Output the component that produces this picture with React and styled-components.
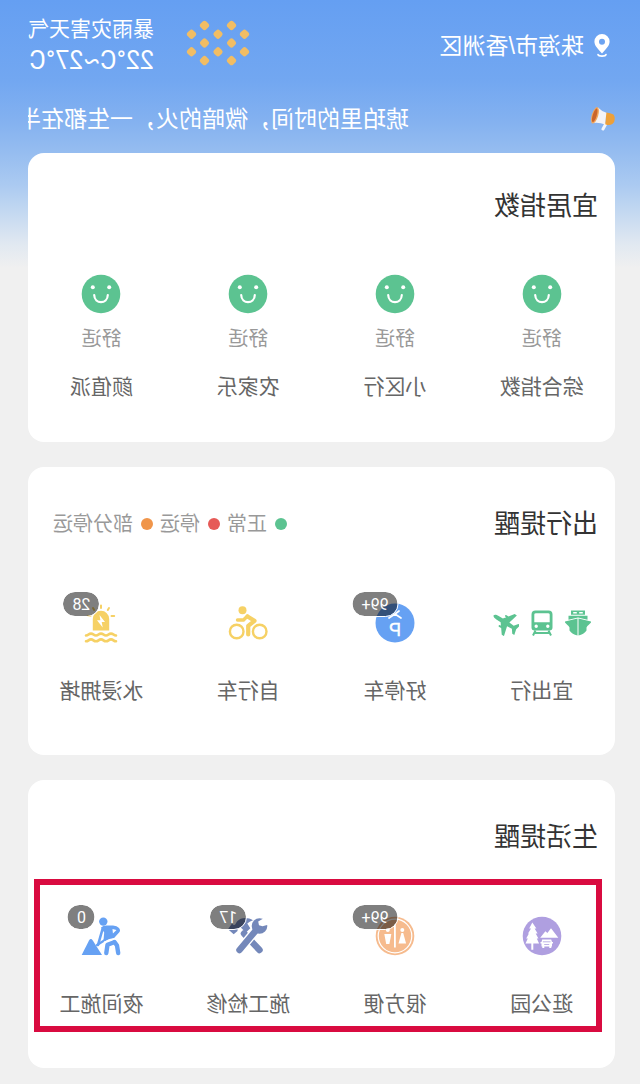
import styled, { createGlobalStyle, css } from "styled-components";

const GREEN = "#5cc391";
const BLUE = "#66a1f3";
const YELLOW = "#f6d165";

export default function App() {
  return (
    <>
      <GlobalStyle />
      <Page>
        <Header>
          <Location href="#location">
            <PinIcon />
            珠海市/香洲区
          </Location>
          <Weather>
            <WeatherIcon />
            <WeatherText>
              <p>暴雨灾害天气</p>
              <Temperature>22°C~27°C</Temperature>
            </WeatherText>
          </Weather>
        </Header>

        <News>
          <MegaphoneIcon />
          <NewsText>琥珀里的时间，微暗的火，一生都在半</NewsText>
        </News>

        <Cards>
          <Card $rated>
            <CardHead>
              <h2>宜居指数</h2>
            </CardHead>
            <Tiles>
              {["综合指数", "小区行", "农家乐", "颜值派"].map((name) => (
                <Tile key={name} type="button">
                  <SmileIcon />
                  <Rating>舒适</Rating>
                  <TileLabel $rated>{name}</TileLabel>
                </Tile>
              ))}
            </Tiles>
          </Card>

          <Card>
            <CardHead>
              <h2>出行提醒</h2>
              <Legend>
                <LegendItem $color={GREEN}>正常</LegendItem>
                <LegendItem $color="#e65a57">停运</LegendItem>
                <LegendItem $color="#f0954a">部分停运</LegendItem>
              </Legend>
            </CardHead>
            <Tiles>
              <Tile type="button">
                <TransportIcons>
                  <ShipIcon />
                  <TrainIcon />
                  <PlaneIcon />
                </TransportIcons>
                <TileLabel>宜出行</TileLabel>
              </Tile>
              <BadgeTile icon={<ParkingIcon />} count="99+" label="好停车" />
              <BadgeTile icon={<BikeIcon />} label="自行车" />
              <BadgeTile icon={<SirenIcon />} count="28" label="水浸拥堵" />
            </Tiles>
          </Card>

          <Card>
            <CardHead>
              <h2>生活提醒</h2>
            </CardHead>
            <Tiles $marked>
              <BadgeTile icon={<ParkIcon />} label="逛公园" />
              <BadgeTile icon={<RestroomIcon />} count="99+" label="很方便" />
              <BadgeTile icon={<ToolsIcon />} count="17" label="施工检修" />
              <BadgeTile icon={<WorkerIcon />} count="0" label="夜间施工" />
            </Tiles>
          </Card>
        </Cards>
      </Page>
    </>
  );
}

function BadgeTile({ icon, count, label }) {
  return (
    <Tile type="button">
      <IconBox>
        {icon}
        {count && <Badge>{count}</Badge>}
      </IconBox>
      <TileLabel>{label}</TileLabel>
    </Tile>
  );
}

function PinIcon() {
  return (
    <svg width="16" height="24" viewBox="0 0 16 24" aria-hidden="true">
      <path
        fill="#fff"
        fillRule="evenodd"
        d="M8 0a7.6 7.6 0 0 1 7.6 7.6C15.600 12 11.500 15.500 8 19.500 4.500 15.500.4 12 .4 7.600A7.600 7.600 0 0 1 8 0Zm0 4.800a3 3 0 1 0 0 6 3 3 0 0 0 0-6Z"
      />
      <path
        d="M4 20.600Q4.500 22.200 8 22.200T12 20.600"
        fill="none"
        stroke="#fff"
        strokeWidth="1.700"
        strokeLinecap="round"
      />
    </svg>
  );
}

function WeatherIcon() {
  const rows = [
    [18.5, 45.5],
    [5.5, 32, 58.5],
    [18.5, 45.5],
    [5.5, 32, 58.5],
    [18.5, 45.5],
  ];
  return (
    <svg width="64" height="46" viewBox="0 0 64 46" aria-hidden="true">
      {rows.map((row, i) =>
        row.map((x) => (
          <rect
            key={`${i}-${x}`}
            x={x - 4}
            y={5.4 + i * 8.8 - 4}
            width="8"
            height="8"
            rx="2.600"
            fill="#f1bd64"
            transform={`rotate(45 ${x} ${5.4 + i * 8.8})`}
          />
        ))
      )}
    </svg>
  );
}

function MegaphoneIcon() {
  return (
    <svg width="24" height="24" viewBox="0 0 24 24" aria-hidden="true">
      <path
        d="M9.500 17.500 12 22"
        stroke="#f3f6fb"
        strokeWidth="3"
        strokeLinecap="round"
      />
      <path
        fill="#eda03a"
        d="M1.500 7.500Q.2 9 .3 12.500T2.600 17Q5.500 19 9.800 17.200L9 5.600Q4.500 6 1.500 7.500Z"
      />
      <path fill="#f4f3f6" d="M8.600 5.800Q13 4.500 17 .4L22.600 16Q15.500 15 10 17.600Z" />
      <ellipse cx="20" cy="8.300" rx="3.200" ry="8.500" fill="#f2a65a" transform="rotate(-17 20 8.300)" />
      <ellipse cx="20.300" cy="8.300" rx="2" ry="7" fill="#c9652c" transform="rotate(-17 20.300 8.300)" />
    </svg>
  );
}

function SmileIcon() {
  return (
    <svg width="40" height="40" viewBox="0 0 40 40" aria-hidden="true">
      <circle cx="20" cy="20" r="19.300" fill={GREEN} />
      <circle cx="11.800" cy="13.200" r="2" fill="#fff" />
      <circle cx="28.200" cy="13.200" r="2" fill="#fff" />
      <path
        d="M13.200 21c.4 9.600 13.200 9.600 13.600 0"
        fill="none"
        stroke="#fff"
        strokeWidth="2.200"
        strokeLinecap="round"
      />
    </svg>
  );
}

function ShipIcon() {
  return (
    <svg width="26" height="26" viewBox="0 0 26 26" aria-hidden="true">
      <path
        fill={GREEN}
        fillRule="evenodd"
        d="M6 .5h14v4.300H6ZM8.200 1.900v1.500h3.600V1.900Zm6 0v1.500h3.600V1.900Z"
      />
      <path fill={GREEN} d="M3.500 5.800h19v4L13 7.400 3.500 9.800Z" />
      <path
        fill={GREEN}
        d="M12.500 8.600v17C9 24.700 6.200 23 4.500 20.400V17.500C3.500 15.500 1.500 14.500 0 12.600v-1ZM13.500 8.600v17c3.500-.9 6.300-2.600 8-5.200V17.500c1-2 3-3 4.500-4.900v-1Z"
      />
    </svg>
  );
}

function TrainIcon() {
  return (
    <svg width="26" height="26" viewBox="0 0 26 26" aria-hidden="true">
      <path
        fill={GREEN}
        fillRule="evenodd"
        d="M6.500.5h13a4 4 0 0 1 4 4v13a3 3 0 0 1-3 3h-15a3 3 0 0 1-3-3v-13a4 4 0 0 1 4-4ZM5.300 4.500v7.800h15.400V4.500Q20.700 3.200 19 3.200H7Q5.300 3.200 5.300 4.500ZM7.200 14.600a1.700 1.700 0 1 0 0 3.400 1.700 1.700 0 0 0 0-3.400Zm11.600 0a1.700 1.700 0 1 0 0 3.400 1.700 1.700 0 0 0 0-3.400Z"
      />
      <path
        d="M6.500 20.500 4 25.500M19.500 20.500 22 25.500M5.500 23h15"
        stroke={GREEN}
        strokeWidth="2"
      />
    </svg>
  );
}

function PlaneIcon() {
  return (
    <svg width="26" height="26" viewBox="0 0 26 26" aria-hidden="true">
      <g transform="rotate(58 13 13)">
        <path
          fill={GREEN}
          d="M13-1.500c1.400 0 2.100 2 2.100 4.500v5l3 2.200V8.800q.9-1.300 1.800 0v2.800l5.300 4v2.600l-10-2.600-.5 5.400 4.100 3v2.400L13 25l-5.800 1.400V24l4.100-3-.5-5.400-10 2.600v-2.600l5.300-4V8.800q.9-1.300 1.800 0v1.400l3-2.200V3c0-2.500.7-4.500 2.100-4.500Z"
        />
      </g>
    </svg>
  );
}

function ParkingIcon() {
  return (
    <svg width="40" height="40" viewBox="0 0 40 40" aria-hidden="true">
      <circle cx="20" cy="20" r="19.500" fill={BLUE} />
      <path
        d="M14 15 20 11 26 15M16 8 20 11"
        fill="none"
        stroke="#fff"
        strokeWidth="1.700"
        strokeLinecap="round"
      />
      <text
        x="20"
        y="33"
        textAnchor="middle"
        fill="#fff"
        stroke="#fff"
        strokeWidth=".4"
        fontFamily="Liberation Sans, sans-serif"
        fontSize="18"
      >
        P
      </text>
    </svg>
  );
}

function BikeIcon() {
  return (
    <svg width="40" height="40" viewBox="0 0 40 40" aria-hidden="true">
      <g fill="none" stroke={YELLOW}>
        <circle cx="8.300" cy="28.500" r="6.800" strokeWidth="2.400" />
        <circle cx="31.300" cy="28.500" r="6.800" strokeWidth="2.400" />
        <path
          d="M20.500 13.500 13.500 17.800 19.800 22.800V31.500"
          strokeWidth="4.200"
          strokeLinecap="round"
          strokeLinejoin="round"
        />
        <path
          d="M20.500 13 24.500 17H30.500"
          strokeWidth="3.400"
          strokeLinecap="round"
          strokeLinejoin="round"
        />
      </g>
      <circle cx="25.500" cy="7.300" r="4" fill={YELLOW} />
    </svg>
  );
}

function SirenIcon() {
  return (
    <svg width="40" height="40" viewBox="0 0 40 40" aria-hidden="true">
      <path fill={YELLOW} d="M11.800 27.500V16a8.200 8.200 0 0 1 16.400 0V27.500Z" />
      <path fill="#fff" d="M21.500 12 16 19h3.300l-1 5.500 5.700-7.200h-3.400Z" />
      <g fill="none" stroke={YELLOW} strokeWidth="2" strokeLinecap="round">
        <path d="M20 2.500V5M12 5l1.200 2M28 5l-1.200 2M6.800 13h2.700M33.200 13h-2.700" />
        <path
          d="M5 32.500c2.500 0 2.500-1.900 5-1.900s2.500 1.900 5 1.900 2.500-1.900 5-1.900 2.500 1.900 5 1.900 2.500-1.900 5-1.900 2.500 1.900 5 1.900M5 38.300c2.500 0 2.500-1.900 5-1.900s2.500 1.900 5 1.900 2.500-1.900 5-1.900 2.500 1.900 5 1.900 2.500-1.900 5-1.900 2.500 1.900 5 1.900"
          strokeWidth="2.600"
        />
      </g>
    </svg>
  );
}

function ParkIcon() {
  return (
    <svg width="40" height="40" viewBox="0 0 40 40" aria-hidden="true">
      <circle cx="20" cy="20" r="19.300" fill="#af9fe0" />
      <g fill="#fff">
        <path d="M29.700 6.500 25.600 12.500h1.800l-3 5h1.900l-2.700 5h1.600l-2.300 5h5.800v6.300h2V27.500h5.800l-2.300-5h1.600l-2.700-5H34l-3-5h1.800Z" />
        <path d="M3.700 21.800 11 12.200l3.600 4.800 2-1.800 5.200 6.600Z" />
        <path d="M10.800 23.400h9l.7 2.600h1v1.600h-1v3h-.8v1.400h-2v-1.400h-5v1.400h-2v-1.400H10v-3H9V26h1Z" />
      </g>
      <path d="M11.500 25.800h7.600M12.800 28.500h5" stroke="#af9fe0" strokeWidth=".8" />
    </svg>
  );
}

function RestroomIcon() {
  return (
    <svg width="40" height="40" viewBox="0 0 40 40" aria-hidden="true">
      <circle cx="20" cy="20" r="19.300" fill="#f6bb8e" />
      <circle cx="20" cy="20" r="16.800" fill="none" stroke="#fff" strokeWidth="1.200" />
      <g fill="#fff">
        <path d="M19.200 8h1.800v23.500h-1.800Z" />
        <circle cx="12.700" cy="14" r="2" />
        <path d="M11.800 17h1.800l2.900 10.500H8.900Z" />
        <circle cx="27.200" cy="14" r="2" />
        <path d="M23.700 18h7l-1.900 10h-3.200Z" />
      </g>
    </svg>
  );
}

function ToolsIcon() {
  return (
    <svg width="40" height="40" viewBox="0 0 40 40" aria-hidden="true">
      <g fill="none" stroke="#7488ba" strokeWidth="6.500" strokeLinecap="round">
        <path d="M24 17.500 8.500 34" />
        <path d="M11 13 28.500 34" stroke="#fff" strokeWidth="9" />
        <path d="M10.500 12.500 28.500 34" />
      </g>
      <circle cx="8.500" cy="10" r="7.800" fill="#7488ba" />
      <path fill="#fff" d="M-1 8.500 3 1.500 9.800 5.500 9 9.300 5.500 10.200Z" />
      <path
        fill="#7488ba"
        d="M15 4.300C20 1 27 1 31 5.500l2 3.300 1.300.2 1.700-1.500 4 5.800-5.700 5-3.800-3.400-.2-2.300-3-1.200-5.300 5-4.300-4.200 3-4.700Q18 5.200 15 4.300Z"
      />
    </svg>
  );
}

function WorkerIcon() {
  return (
    <svg width="40" height="40" viewBox="0 0 40 40" aria-hidden="true">
      <g fill={BLUE}>
        <circle cx="17.700" cy="5.600" r="4.200" />
        <path d="M39.300 39 32 24.500q-1.800-2.800-3.800 0L19 39Z" />
        <path d="M20 11.500Q18 9.600 14.500 9.600L8 9.500Q4 9.800 2 12q-2 2.600-.1 4.600l5 5.500 10.600 2.200-.7-7.700Z" />
      </g>
      <path d="M4.500 14 8.500 13l-.4 4.600Z" fill="#fff" />
      <g fill="none" stroke={BLUE} strokeLinecap="round" strokeLinejoin="round">
        <path d="M18.300 12.500 23 29" strokeWidth="2.600" />
        <path d="M8 19 24 29" strokeWidth="2.200" />
        <path d="M6.500 26 4 29.500 2.800 37" strokeWidth="4.400" />
        <path d="M7.500 26.500 13.500 28.800 14.700 37" strokeWidth="4.400" />
      </g>
      <path d="M5 22.200 17 26" stroke="#fff" strokeWidth="1.200" />
    </svg>
  );
}

const GlobalStyle = createGlobalStyle`
  * {
    box-sizing: border-box;
  }

  body {
    margin: 0;
    background-color: #f0f0f0;
  }

  h2,
  p {
    margin: 0;
    font-weight: 400;
  }

  svg {
    display: block;
    flex-shrink: 0;
  }
`;

const Page = styled.main`
  transform: scaleX(-1);
  padding: 13px 28px 15px 25px;
  font-family: "Liberation Sans", "Noto Sans CJK SC", sans-serif;
  background: linear-gradient(
      to bottom,
      #659ff2 0,
      #72a7f1 80px,
      #83b1f0 120px,
      #96bdf0 153px,
      #abcaf1 185px,
      #c6daf1 215px,
      #e0e8f1 243px,
      #f0f0f0 268px
    )
    #f0f0f0;
`;

const Header = styled.header`
  display: flex;
  align-items: center;
  justify-content: space-between;
  color: #fff;
`;

const Location = styled.a`
  display: flex;
  align-items: center;
  gap: 10px;
  padding: 2px 0 0 5px;
  font-size: 23px;
  line-height: 32px;
  color: inherit;
  text-decoration: none;
`;

const Weather = styled.div`
  display: flex;
  gap: 32px;

  svg {
    margin-top: 7px;
  }
`;

const WeatherText = styled.div`
  font-size: 21px;
  line-height: 32px;
`;

const Temperature = styled.p`
  font-family: Roboto, "Liberation Sans", sans-serif;
  font-size: 25px;
`;

const News = styled.div`
  display: flex;
  align-items: center;
  margin: 26px 0 18px;
  color: #fff;
`;

const NewsText = styled.p`
  flex: 1;
  min-width: 0;
  padding-left: 31%;
  overflow: hidden;
  white-space: nowrap;
  font-size: 23px;
  line-height: 32px;
`;

const Cards = styled.div`
  display: grid;
  gap: 25px;
`;

const Card = styled.section`
  display: grid;
  gap: ${({ $rated }) => ($rated ? "49px" : "60px")};
  padding: ${({ $rated }) => ($rated ? "34px 0 41px" : "38px 0 50px")};
  border-radius: 16px;
  background-color: #fff;
`;

const CardHead = styled.div`
  display: flex;
  align-items: center;
  justify-content: space-between;
  padding: 0 25px 0 17px;

  h2 {
    font-size: 26px;
    line-height: 38px;
    color: #333;
  }
`;

const Legend = styled.ul`
  display: flex;
  gap: 7px;
  margin: 0;
  padding: 0;
  list-style: none;
`;

const LegendItem = styled.li`
  display: flex;
  align-items: center;
  gap: 8px;
  font-size: 20px;
  line-height: 28px;
  color: #999;

  &::before {
    content: "";
    width: 12px;
    height: 12px;
    border-radius: 50%;
    background-color: ${({ $color }) => $color};
  }
`;

const Tiles = styled.div`
  position: relative;
  display: grid;
  grid-template-columns: repeat(4, 1fr);

  ${({ $marked }) =>
    $marked &&
    css`
      &::after {
        content: "";
        position: absolute;
        inset: -37px 6px -14px 13px;
        border: 6px solid #d90b40;
        pointer-events: none;
      }
    `}
`;

const Tile = styled.button`
  display: flex;
  flex-direction: column;
  align-items: center;
  padding: 0;
  border: 0;
  background: none;
  font-family: inherit;
  cursor: pointer;
`;

const Rating = styled.span`
  margin-top: 11px;
  font-size: 20px;
  line-height: 28px;
  color: #999;
`;

const TileLabel = styled.span`
  margin-top: ${({ $rated }) => ($rated ? "20px" : "34px")};
  font-size: 21px;
  line-height: 28px;
  color: #666;
`;

const TransportIcons = styled.span`
  display: flex;
  align-items: center;
  gap: 10px;
  height: 40px;
`;

const IconBox = styled.span`
  position: relative;
  width: 40px;
  height: 40px;
`;

const Badge = styled.span`
  position: absolute;
  top: 1px;
  left: 100%;
  transform: translate(-50%, -50%);
  min-width: 26px;
  padding: 1px 9px 0;
  border: 1px solid #fff;
  border-radius: 13px;
  background-color: rgba(0, 0, 0, 0.5);
  background-clip: padding-box;
  font-family: Roboto, "Liberation Sans", sans-serif;
  font-size: 16px;
  line-height: 23px;
  text-align: center;
  color: #fff;
`;
